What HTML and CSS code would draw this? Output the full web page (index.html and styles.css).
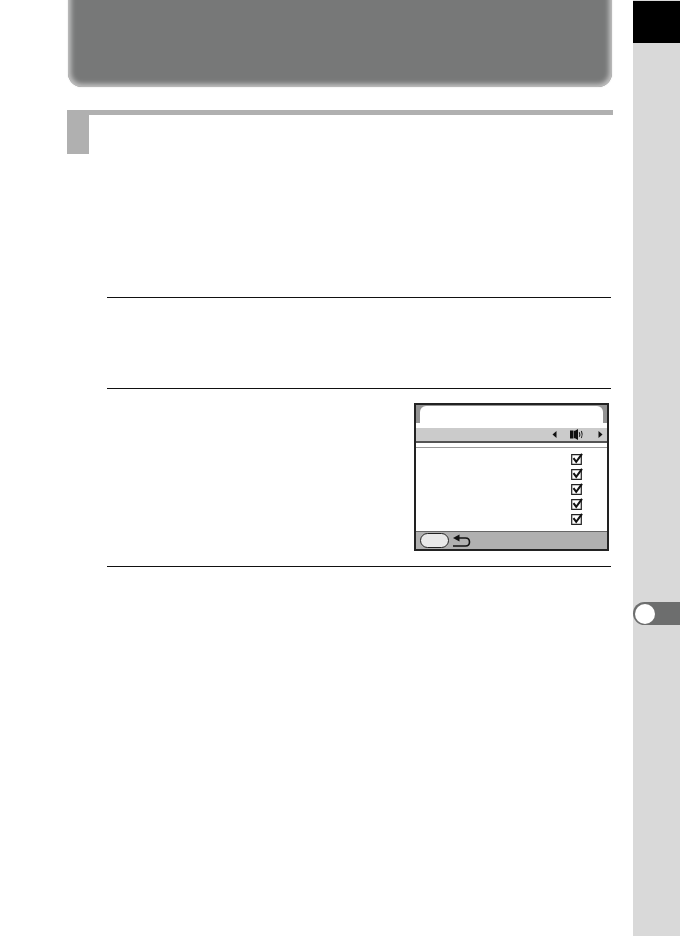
FILE: index.html
```html
<!DOCTYPE html>
<html lang="en">
<head>
<meta charset="utf-8">
<title>Sound settings</title>
<link rel="stylesheet" href="styles.css">
</head>
<body>
<div class="page">
  <main class="content">
    <div class="banner"></div>
    <section class="section">
      <div class="section-head"><div class="section-tab"></div></div>
      <div class="step step-first"></div>
      <div class="step step-second">
        <div class="screen">
          <div class="screen-title"><div class="screen-tab"></div></div>
          <div class="screen-selector">
            <svg width="5" height="7" viewBox="0 0 5 7"><path d="M4.5 0 V7 L0.5 3.5 Z" fill="#111"/></svg>
            <svg class="speaker" width="14" height="11" viewBox="0 0 14 11"><path d="M0 1.5H3.4V9.5H0ZM3.9 1.8H5L8 0V11L5 9.2H3.9Z" fill="#111"/><path d="M9.3 3.2Q10.3 5.5 9.3 7.8M11.4 2Q13 5.5 11.4 9" fill="none" stroke="#222" stroke-width="1.1"/></svg>
            <svg class="arrow-right" width="5" height="7" viewBox="0 0 5 7"><path d="M0.5 0 V7 L4.5 3.5 Z" fill="#111"/></svg>
          </div>
          <div class="screen-rule"></div>
          <ul class="screen-list">
            <li><svg width="12" height="12" viewBox="0 0 12 12"><path d="M.7 1.7H10.3V11.3H.7Z" fill="none" stroke="#222" stroke-width="1.2"/><path d="M2.5 5.2L5.2 8.8 11 .8" fill="none" stroke="#111" stroke-width="2"/></svg></li>
            <li><svg width="12" height="12" viewBox="0 0 12 12"><path d="M.7 1.7H10.3V11.3H.7Z" fill="none" stroke="#222" stroke-width="1.2"/><path d="M2.5 5.2L5.2 8.8 11 .8" fill="none" stroke="#111" stroke-width="2"/></svg></li>
            <li><svg width="12" height="12" viewBox="0 0 12 12"><path d="M.7 1.7H10.3V11.3H.7Z" fill="none" stroke="#222" stroke-width="1.2"/><path d="M2.5 5.2L5.2 8.8 11 .8" fill="none" stroke="#111" stroke-width="2"/></svg></li>
            <li><svg width="12" height="12" viewBox="0 0 12 12"><path d="M.7 1.7H10.3V11.3H.7Z" fill="none" stroke="#222" stroke-width="1.2"/><path d="M2.5 5.2L5.2 8.8 11 .8" fill="none" stroke="#111" stroke-width="2"/></svg></li>
            <li><svg width="12" height="12" viewBox="0 0 12 12"><path d="M.7 1.7H10.3V11.3H.7Z" fill="none" stroke="#222" stroke-width="1.2"/><path d="M2.5 5.2L5.2 8.8 11 .8" fill="none" stroke="#111" stroke-width="2"/></svg></li>
          </ul>
          <div class="screen-footer">
            <div class="pill"></div>
            <svg class="back" width="18" height="14" viewBox="0 0 18 14"><path d="M0 4L6.5 0.5V7.5Z" fill="#111"/><path d="M6 4H12.5Q16.5 4 16.5 8Q16.5 12 12.5 12H0" fill="none" stroke="#111" stroke-width="1.6"/></svg>
          </div>
        </div>
      </div>
      <div class="step step-last"></div>
    </section>
  </main>
  <aside class="sidebar">
    <div class="side-black"></div>
    <div class="side-tab"><span class="side-dot"></span></div>
  </aside>
</div>
</body>
</html>
```
FILE: styles.css
```css
* { box-sizing: border-box; }
html, body { margin: 0; padding: 0; background: #fff; }
.page { width: 680px; height: 936px; display: flex; overflow: hidden; }
.content { width: 633px; padding-left: 67px; overflow: hidden; }
.banner {
  width: 544px; height: 107px; margin-top: -20px; margin-left: 1px;
  background: #777878;
  border-radius: 14px;
  box-shadow: inset 0 0 5px 3px #c4c4c4, 0 0 2px #ddd;
}
.section { margin-top: 23px; width: 546px; }
.section-head { height: 44px; border-top: 5px solid #b0b0b0; }
.section-tab { width: 22px; height: 39px; background: #b0b0b0; }
.step { margin-left: 40px; width: 504px; border-top: 1px solid #111; }
.step-first { margin-top: 143px; height: 91px; }
.step-second { height: 178px; padding: 14px 0 0 307px; }
.screen {
  width: 195px; height: 148px; border: 2px solid #222;
  display: flex; flex-direction: column; background: #fff;
}
.screen-title {
  height: 18px; padding: 1px 4px 0; background: #939393; display: flex;
}
.screen-tab { flex: 1; background: #fff; border-radius: 6px 6px 0 0; }
.screen-selector {
  height: 15px; margin-top: 5px; background: #cbcbcb; border-bottom: 2px solid #555;
  display: flex; align-items: center; padding-left: 136px;
}
.speaker { margin-left: 13px; }
.arrow-right { margin-left: 14px; }
.screen-rule { height: 1px; background: #999; margin-top: 4px; }
.screen-list { list-style: none; margin: 0; padding: 5px 0 0 155px; flex: 1; }
.screen-list li { height: 15px; display: flex; }
.screen-footer {
  height: 18px; background: #b0b0b0; border-top: 1px solid #666;
  display: flex; align-items: center; padding-left: 4px;
}
.pill { width: 29px; height: 15px; background: #e9e9e9; border: 1px solid #222; border-radius: 8px; }
.back { margin-left: 4px; }
.sidebar { width: 47px; background: #d9d9d9; padding-top: 1px; }
.side-black { height: 42px; background: #000; }
.side-tab {
  margin-top: 559px; height: 23px; background: #6d6e6e;
  border-radius: 12px 0 0 12px; display: flex; align-items: center; padding-left: 2px;
}
.side-dot { width: 20px; height: 20px; border-radius: 50%; background: #fff; }
```
